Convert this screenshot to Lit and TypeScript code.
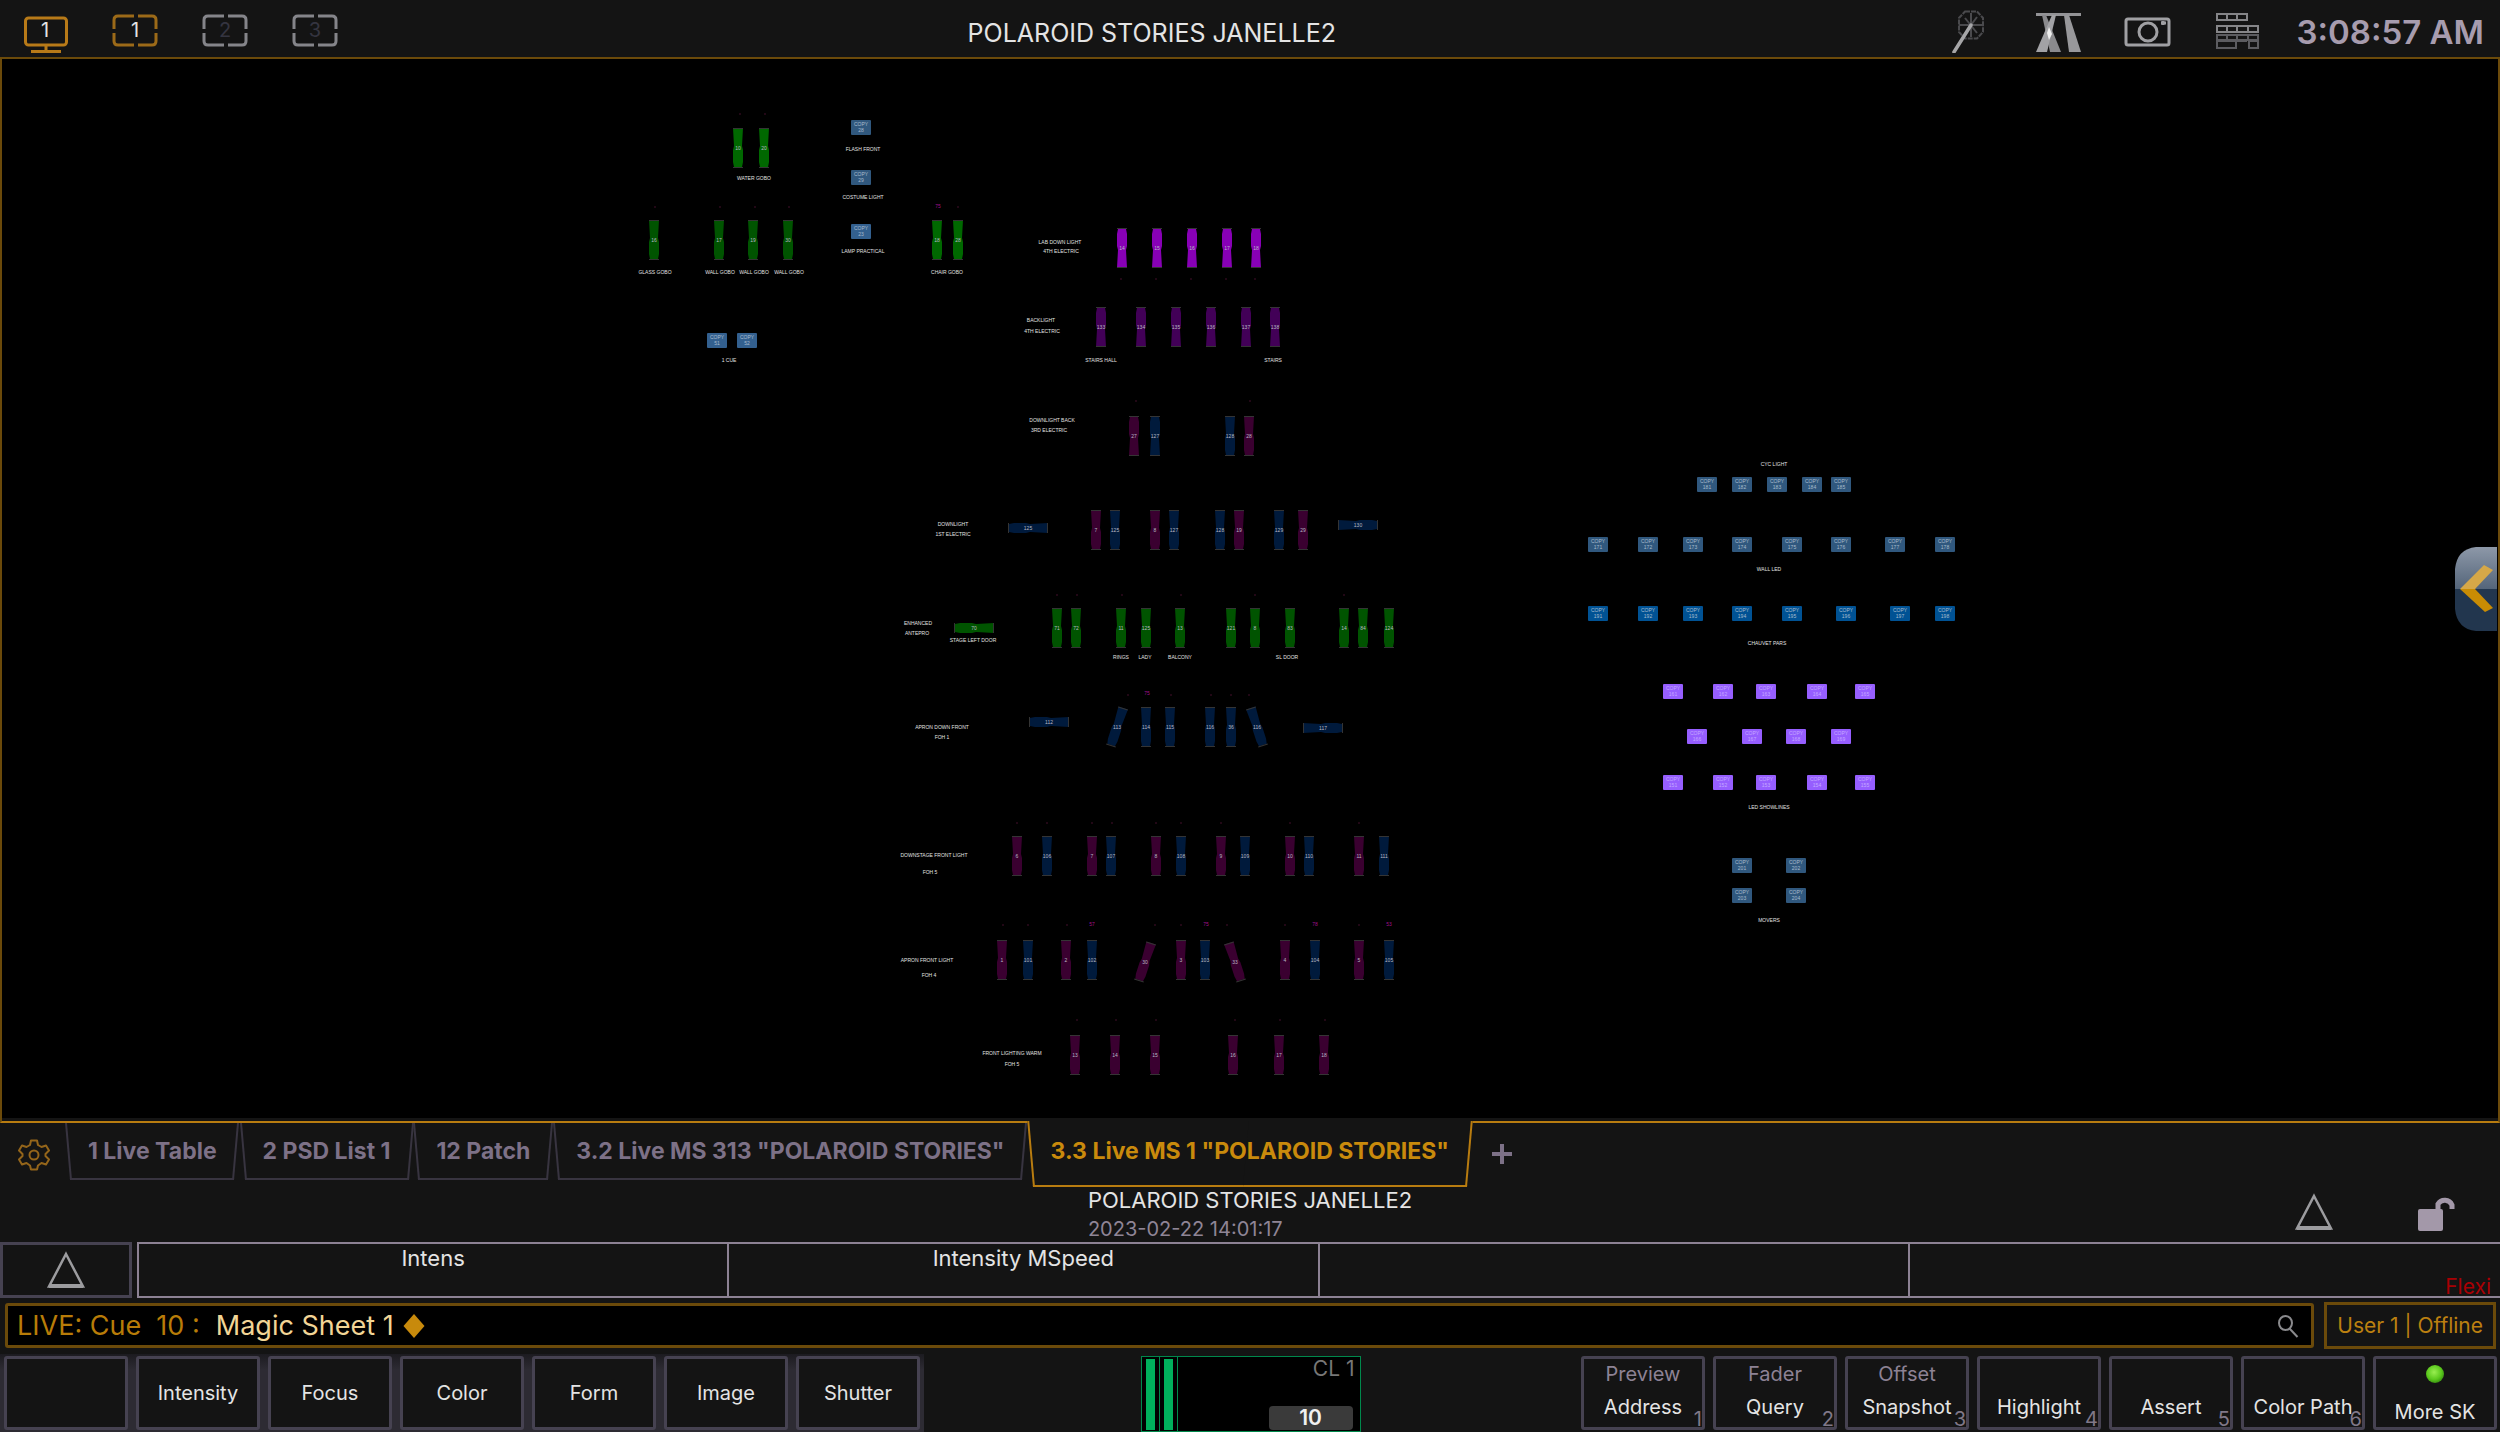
import { LitElement, html, svg, css, nothing } from "lit";
import { customElement } from "lit/decorators.js";
import { classMap } from "lit/directives/class-map.js";

type Spot = [tone: string, x: number, y: number, channel: string, turn?: number];
type Tile = [tone: string, x: number, y: number, channel: string];
type Note = [text: string, x: number, y: number];

/* Lighting instruments: tone, centre, channel, rotation. */
const SPOTS: Spot[] = [
  ["lime", 738, 148, "10"], ["lime", 764, 148, "20"],
  ["green", 654, 240, "16"], ["green", 719, 240, "17"], ["green", 753, 240, "19"], ["green", 788, 240, "30"],
  ["lime", 937, 240, "18"], ["lime", 958, 240, "28"],
  ["violet", 1122, 248, "14", 180], ["violet", 1157, 248, "15", 180], ["violet", 1192, 248, "16", 180],
  ["violet", 1227, 248, "17", 180], ["violet", 1256, 248, "18", 180],
  ["plum", 1101, 327, "133", 180], ["plum", 1141, 327, "134", 180], ["plum", 1176, 327, "135", 180],
  ["plum", 1211, 327, "136", 180], ["plum", 1246, 327, "137", 180], ["plum", 1275, 327, "138", 180],
  ["wine", 1134, 436, "27", 180], ["navy", 1155, 436, "127", 180], ["navy", 1230, 436, "128"], ["wine", 1249, 436, "28"],
  ["navy", 1028, 528, "125", 90], ["wine", 1096, 530, "7"], ["navy", 1115, 530, "125"],
  ["wine", 1155, 530, "8"], ["navy", 1174, 530, "127"], ["navy", 1220, 530, "128"], ["wine", 1239, 530, "19"],
  ["navy", 1279, 530, "129"], ["wine", 1303, 530, "29"], ["navy", 1358, 525, "130", -90],
  ["green", 974, 628, "70", 90], ["green", 1057, 628, "71"], ["green", 1076, 628, "72"],
  ["green", 1121, 628, "11"], ["green", 1146, 628, "125"], ["green", 1180, 628, "13"],
  ["green", 1231, 628, "121"], ["green", 1255, 628, "8"], ["green", 1290, 628, "83"],
  ["green", 1344, 628, "14"], ["green", 1363, 628, "84"], ["green", 1389, 628, "124"],
  ["navy", 1049, 722, "112", 90], ["navy", 1117, 727, "113", 18], ["navy", 1146, 727, "114"],
  ["navy", 1170, 727, "115"], ["navy", 1210, 727, "116"], ["navy", 1231, 727, "36"],
  ["navy", 1257, 727, "116", -18], ["navy", 1323, 728, "117", -90],
  ["wine", 1017, 856, "6"], ["navy", 1047, 856, "106"], ["wine", 1092, 856, "7"], ["navy", 1111, 856, "107"],
  ["wine", 1156, 856, "8"], ["navy", 1181, 856, "108"], ["wine", 1221, 856, "9"], ["navy", 1245, 856, "109"],
  ["wine", 1290, 856, "10"], ["navy", 1309, 856, "110"], ["wine", 1359, 856, "11"], ["navy", 1384, 856, "111"],
  ["wine", 1002, 960, "1"], ["navy", 1028, 960, "101"], ["wine", 1066, 960, "2"], ["navy", 1092, 960, "102"],
  ["wine", 1145, 962, "30", 18], ["wine", 1181, 960, "3"], ["navy", 1205, 960, "103"], ["wine", 1235, 962, "33", -18],
  ["wine", 1285, 960, "4"], ["navy", 1315, 960, "104"], ["wine", 1359, 960, "5"], ["navy", 1389, 960, "105"],
  ["wine", 1075, 1055, "13"], ["wine", 1115, 1055, "14"], ["wine", 1155, 1055, "15"],
  ["wine", 1233, 1055, "16"], ["wine", 1279, 1055, "17"], ["wine", 1324, 1055, "18"],
];

const line = (tone: string, y: number, first: number, xs: number[]): Tile[] =>
  xs.map((x, i) => [tone, x, y, String(first + i)] as Tile);

const TILES: Tile[] = [
  ["steel", 861, 128, "28"], ["steel", 861, 178, "29"], ["sky", 861, 232, "23"],
  ["sky", 717, 341, "51"], ["sky", 747, 341, "52"],
  ...line("steel", 485, 181, [1707, 1742, 1777, 1812, 1841]),
  ...line("steel", 545, 171, [1598, 1648, 1693, 1742, 1792, 1841, 1895, 1945]),
  ...line("azure", 614, 191, [1598, 1648, 1693, 1742, 1792, 1846, 1900, 1945]),
  ...line("lilac", 692, 161, [1673, 1723, 1766, 1817, 1865]),
  ...line("lilac", 737, 166, [1697, 1752, 1796, 1841]),
  ...line("lilac", 783, 151, [1673, 1723, 1766, 1817, 1865]),
  ...line("steel", 866, 201, [1742, 1796]),
  ...line("steel", 896, 203, [1742, 1796]),
];

const NOTES: Note[] = [
  ["FLASH FRONT", 863, 149], ["WATER GOBO", 754, 178], ["COSTUME LIGHT", 863, 197], ["LAMP PRACTICAL", 863, 251],
  ["GLASS GOBO", 655, 272], ["WALL GOBO", 720, 272], ["WALL GOBO", 754, 272], ["WALL GOBO", 789, 272],
  ["CHAIR GOBO", 947, 272], ["1 CUE", 729, 360],
  ["LAB DOWN LIGHT", 1060, 242], ["4TH ELECTRIC", 1061, 251],
  ["BACKLIGHT", 1041, 320], ["4TH ELECTRIC", 1042, 331], ["STAIRS HALL", 1101, 360], ["STAIRS", 1273, 360],
  ["DOWNLIGHT BACK", 1052, 420], ["3RD ELECTRIC", 1049, 430],
  ["DOWNLIGHT", 953, 524], ["1ST ELECTRIC", 953, 534],
  ["ENHANCED", 918, 623], ["ANTEPRO", 917, 633], ["STAGE LEFT DOOR", 973, 640],
  ["RINGS", 1121, 657], ["LADY", 1145, 657], ["BALCONY", 1180, 657], ["SL DOOR", 1287, 657],
  ["APRON DOWN FRONT", 942, 727], ["FOH 1", 942, 737],
  ["DOWNSTAGE FRONT LIGHT", 934, 855], ["FOH 5", 930, 872],
  ["APRON FRONT LIGHT", 927, 960], ["FOH 4", 929, 975],
  ["FRONT LIGHTING WARM", 1012, 1053], ["FOH 5", 1012, 1064],
  ["CYC LIGHT", 1774, 464], ["WALL LED", 1769, 569], ["CHAUVET PARS", 1767, 643],
  ["LED SHOWLINES", 1769, 807], ["MOVERS", 1769, 920],
];

/* Changed levels above an instrument. */
const LEVELS: Note[] = [
  ["75", 938, 206], ["75", 1147, 693], ["57", 1092, 924], ["75", 1206, 924], ["78", 1315, 924], ["53", 1389, 924],
];

/* Levels at zero: a barely lit dot above the instrument. */
const ZEROS: [number, number[]][] = [
  [114, [740, 765]],
  [207, [655, 720, 755, 789, 958]],
  [279, [1121, 1156, 1191, 1226, 1255]],
  [401, [1136, 1250]],
  [595, [1057, 1077, 1122, 1181, 1255, 1344]],
  [695, [1128, 1171, 1211, 1231, 1249]],
  [823, [1017, 1047, 1092, 1112, 1156, 1181, 1221, 1290, 1359]],
  [925, [1003, 1028, 1067, 1155, 1181, 1227, 1285, 1359]],
  [1020, [1077, 1116, 1156, 1235, 1280, 1325]],
];

const TABS = [
  "1 Live Table",
  "2 PSD List 1",
  "12 Patch",
  '3.2 Live MS 313 "POLAROID STORIES"',
  '3.3 Live MS 1 "POLAROID STORIES"',
];

const ENCODERS = ["Intens", "Intensity MSpeed", "", ""];
const CATEGORIES = ["", "Intensity", "Focus", "Color", "Form", "Image", "Shutter"];
const SOFTKEYS = [
  ["Preview", "Address"], ["Fader", "Query"], ["Offset", "Snapshot"],
  ["", "Highlight"], ["", "Assert"], ["", "Color Path"],
];

const triangle = html`<svg class="triangle" viewBox="0 0 40 38" aria-hidden="true">
  <path d="M20 3 37 35.5H3Z" /><path class="base" d="M3 35H37" />
</svg>`;

@customElement("magic-sheet")
export class MagicSheet extends LitElement {
  static styles = css`
    :host { display: block; min-height: 0; }
    .canvas { display: block; width: 100%; height: 100%; font-family: "Liberation Sans", Arial, sans-serif; }
    text { text-anchor: middle; dominant-baseline: central; }
    .note { font-size: 5px; fill: #e2e2e2; }
    .channel { font-size: 5px; fill: #b9b9c4; }
    .caption { font-size: 5px; fill: #a9bccd; }
    .lilac ~ .caption { fill: #c4a8ff; }
    .level { font-size: 5px; fill: #a0108c; }
    .zero { fill: #2c0a1c; }
    .caps { stroke: #343434; }
    .lime { fill: #006800; }
    .green { fill: #005400; }
    .violet { fill: #8800b6; }
    .plum { fill: #420057; }
    .wine { fill: #3a0030; }
    .navy { fill: #001a3c; }
    .steel { fill: #30587e; }
    .sky { fill: #33608f; }
    .azure { fill: #005294; }
    .lilac { fill: #965eff; }
  `;

  render() {
    return html`<svg class="canvas" viewBox="2 59 2496 1059" role="img" aria-label="Magic Sheet 1">
      ${SPOTS.map(([tone, x, y, channel, turn = 0]) => svg`
        <g transform="translate(${x} ${y})">
          <g transform="rotate(${turn})">
            <path class=${tone} d="M-5-20H5L4-2 5 2V14L4 19H-4L-5 14V2L-4-2Z" />
            <path class="caps" d="M-5-19.5H5M-5 19.5H5" />
          </g>
          <text class="channel" x="0" y="0">${channel}</text>
        </g>`)}
      ${TILES.map(([tone, x, y, channel]) => svg`
        <g transform="translate(${x} ${y})">
          <rect class=${tone} x="-10" y="-8" width="20" height="15" rx="1" />
          <text class="caption" x="0" y="-4">COPY</text>
          <text class="caption" x="0" y="2">${channel}</text>
        </g>`)}
      ${NOTES.map(([text, x, y]) => svg`<text class="note" x=${x} y=${y}>${text}</text>`)}
      ${LEVELS.map(([text, x, y]) => svg`<text class="level" x=${x} y=${y}>${text}</text>`)}
      ${ZEROS.map(([y, xs]) => xs.map((x) => svg`<circle class="zero" cx=${x} cy=${y} r="1" />`))}
    </svg>`;
  }
}

@customElement("app-root")
export class AppRoot extends LitElement {
  static styles = css`
    :host {
      display: flex; flex-direction: column; height: 100vh; overflow: hidden;
      background: #141414; color: #e4e4e4;
      font-family: Inter, "Liberation Sans", sans-serif; font-size: 20px; line-height: 24px;
    }
    * { box-sizing: border-box; }
    button, input { font: inherit; color: inherit; background: none; border: 0; padding: 0; margin: 0; border-radius: 0; }
    svg { display: block; fill: none; }
    h1, h2, p { margin: 0; font-weight: 400; }

    .topbar { display: flex; align-items: center; height: 57px; padding: 0 16px 0 20px; flex: none; }
    .screens { display: flex; gap: 42px; padding-left: 1px; }
    .screen { position: relative; width: 48px; height: 48px; }
    .screen svg { width: 48px; height: 48px; stroke: #85858a; stroke-width: 3; }
    .screen span { position: absolute; inset: 13px 0 auto; text-align: center; line-height: 24px; color: #343440; }
    .screen.lit svg { stroke: #9c6a18; }
    .screen.current svg { stroke: #b87a18; }
    .screen.lit span, .screen.current span { color: #e4e4e4; }
    .title { flex: 1; text-align: center; font-size: 25px; line-height: 32px; padding: 8px 0 0 24px; }
    .tools { display: flex; justify-content: flex-end; align-items: center; gap: 38px; }
    .tools svg { width: 52px; height: 48px; }
    .clock { font-size: 33px; line-height: 40px; font-weight: 600; color: #a79cae; padding-top: 6px; white-space: nowrap; margin-left: -4px; }

    .sheet { position: relative; flex: 1; min-height: 0; background: #000; border: 2px solid #6b4a0a; border-bottom-color: #b87c10; display: flex; flex-direction: column; }
    .sheet magic-sheet { flex: 1; }
    .lip { height: 3px; background: #141414; }
    .drawer { position: absolute; right: 1px; top: calc(46% - 1px); width: 42px; height: 84px; }
    .drawer svg { width: 42px; height: 84px; }

    .tabs { display: flex; align-items: flex-start; height: 64px; padding-left: 65px; position: relative; flex: none; }
    .settings { position: absolute; left: 17px; top: 15px; width: 34px; height: 34px; }
    .tab { position: relative; height: 57px; padding: 0 23px 1px; color: #7d7187; font-size: 23px; font-weight: 700; white-space: nowrap; }
    .tab::before, .tab::after { content: ""; position: absolute; top: 0; bottom: 0; width: 50%; border: 0 solid #383440; border-bottom-width: 2px; }
    .tab::before { left: 5px; border-left-width: 2px; transform: skewX(5deg); transform-origin: bottom; }
    .tab::after { right: 5px; border-right-width: 2px; transform: skewX(-5deg); transform-origin: bottom; }
    .tab span { position: relative; z-index: 1; }
    .tab.active { height: 66px; margin-top: -2px; padding-bottom: 6px; color: #c98a0c; }
    .tab.active::before, .tab.active::after { background: #141414; border-color: #b87c10; }
    .add { width: 60px; height: 62px; display: grid; place-items: center; }
    .add svg { width: 20px; height: 20px; }

    .info { display: grid; grid-template-columns: 1fr auto 1fr; height: 55px; flex: none; }
    .show { grid-column: 2; }
    .show h2 { font-size: 22px; line-height: 26px; }
    .show p { font-size: 20px; line-height: 32px; color: #8f8596; }
    .status { display: flex; justify-content: flex-end; gap: 82px; padding: 6px 42px 0 0; }
    .triangle { width: 40px; height: 38px; stroke: #9c9c9f; stroke-width: 2.5; }
    .triangle .base { stroke-width: 4; }
    .lock { width: 42px; height: 40px; }

    .encoders { display: flex; gap: 5px; height: 56px; flex: none; }
    .page { width: 132px; border: 3px solid #464251; display: grid; place-items: center; }
    .wheels { flex: 1; display: grid; grid-template-columns: repeat(4, 1fr); border: 2px solid #8d8294; border-right: 0; }
    .wheel { position: relative; font-size: 22px; padding: 2px 0 26px; }
    .wheel:not(:last-child) { border-right: 2px solid #8d8294; }
    .flexi { position: absolute; right: 9px; bottom: -3px; font-size: 21px; line-height: 24px; color: #a80004; }

    .command { display: flex; gap: 10px; align-items: center; padding: 4px 4px 5px 5px; flex: none; }
    .prompt { flex: 1; height: 45px; display: flex; align-items: center; border: 3px solid #6b4a0a; border-radius: 3px; background: #000; padding: 0 12px 0 9px; font-size: 27px; line-height: 32px; }
    .prompt label { color: #b87c08; white-space: pre; margin-right: 16px; }
    .prompt input { field-sizing: content; color: #f2d596; outline: 0; }
    .diamond { width: 22px; height: 26px; margin: 0 auto 0 9px; }
    .search svg { width: 22px; height: 24px; }
    .user { height: 47px; border: 3px solid #6b4a0a; padding: 0 10px; color: #bc8010; font-size: 21px; white-space: nowrap; }

    .keys { display: flex; justify-content: space-between; height: 78px; flex: none; }
    .bank { display: flex; gap: 8px; padding: 2px 4px; }
    .bank.left { background: linear-gradient(#1c1b20, #2d2b33 20%); }
    .bank.right { padding-right: 3px; }
    .key { position: relative; width: 124px; height: 74px; border: 3px solid #464251; border-radius: 3px; background: #141414; white-space: nowrap; }
    .key.pair { display: grid; grid-template-rows: 30px 36px; align-items: center; justify-items: center; }
    .key.pair .upper { color: #8d8294; }
    .key sub { position: absolute; right: 0; bottom: -4px; font-size: 20px; line-height: 24px; color: #807888; }
    .key.more { grid-template-rows: 30px 46px; }
    .key .led { width: 18px; height: 18px; border-radius: 50%; background: radial-gradient(circle at 45% 40%, #98ee50, #5ac81c 50%, #1a5a08); }
    .cue { width: 220px; height: 76px; margin-top: 2px; display: flex; border: 1px solid #00884c; background: #000; }
    .fader { width: 18px; border-right: 1px solid #00884c; padding: 2px 4px 1px; }
    .fader i { display: block; height: 100%; background: #00b05c; }
    .cue-text { flex: 1; display: flex; flex-direction: column; align-items: flex-end; justify-content: space-between; padding: 0 5px 1px; }
    .cue-list { color: #777; font-size: 21px; }
    .cue-number { width: 84px; margin-right: 2px; border-radius: 4px; background: #3a3a3a; color: #f0f0f0; font-size: 21px; font-weight: 600; text-align: center; }
    .spacer { flex: 1; }
  `;

  private screen(label: string, kind: "current" | "lit" | "off") {
    return html`<button class=${classMap({ screen: true, lit: kind === "lit", current: kind === "current" })} aria-label="Screen ${label}">
      ${kind === "current"
        ? html`<svg viewBox="0 0 48 48"><rect x="4.5" y="13" width="41" height="27" rx="3" /><path d="M25 40v6M10 46.500H40" /></svg>`
        : html`<svg viewBox="0 0 48 48"><path d="M23 11H7q-4 0-4 4v9M27 11h14q4 0 4 4v9M3 28v8q0 4 4 4H23M45 28v8q0 4-4 4H27" /></svg>`}
      <span>${label}</span>
    </button>`;
  }

  render() {
    return html`
      <header class="topbar">
        <nav class="screens" aria-label="Screens">
          ${this.screen("1", "current")}${this.screen("1", "lit")}${this.screen("2", "off")}${this.screen("3", "off")}
        </nav>
        <h1 class="title">POLAROID STORIES JANELLE2</h1>
        <div class="tools">
          <button aria-label="Color wheel"><svg viewBox="0 0 52 48">
            <g stroke="#4a4a4d" stroke-width="2"><path d="M24 6.500H36L42 13V27L36 33.500H24L18 27V13Z" stroke-dasharray="5 1" /><path d="M30 8V32M18 20H42M24 13 36 28M36 12 30 20" /></g>
            <path d="M30 20 13 47" stroke="#a6a6a8" stroke-width="3.500" stroke-linecap="round" />
          </svg></button>
          <button aria-label="Beams"><svg viewBox="0 0 52 48">
            <path d="M5 8H50V11H5Z" fill="#939396" />
            <path d="M11 10H15L30 47H19Z" fill="#8a8a8d" /><path d="M21 10H25L16 47H5Z" fill="#a2a2a5" /><path d="M16 28 18 22 21 29 18 35Z" fill="#eee" /><path d="M33 10H38L50 47H38Z" fill="#98989b" />
          </svg></button>
          <button aria-label="Snapshot"><svg viewBox="0 0 52 48" stroke="#a0a0a3" stroke-width="3">
            <rect x="5" y="14" width="43" height="26" rx="2" /><ellipse cx="27" cy="27" rx="9" ry="9" /><path d="M42 16V20M40 18H45" />
          </svg></button>
          <button aria-label="Keyboard"><svg viewBox="0 0 52 48" stroke="#858588" stroke-width="2">
            <path d="M6 9H36V15H6ZM16 9V15M26 9V15M6 21H47V27H6ZM16 21V27M26 21V27M37 21V27" />
            <path d="M6 30H47V35H6ZM16 30V35M26 30V35M37 30V35M6 36H25V43H6ZM26 35V36H36M38 36H47V43H38Z" stroke="#5c5c60" />
          </svg></button>
          <time class="clock">3:08:57 AM</time>
        </div>
      </header>

      <main class="sheet">
        <magic-sheet></magic-sheet>
        <div class="lip"></div>
        <button class="drawer" aria-label="Open drawer"><svg viewBox="0 0 42 84">
          <defs><linearGradient id="gloss" x1="0" y1="0" x2="0" y2="1"><stop offset="0" stop-color="#8d98a8" /><stop offset="1" stop-color="#54657a" /></linearGradient></defs>
          <path d="M0 42V22Q2 2 21 0H42V42Z" fill="url(#gloss)" /><path d="M0 42V62Q2 82 21 84H42V42Z" fill="#22364e" />
          <path d="M5 42 29 18 38 23 20 42Z" fill="#d6a848" /><path d="M5 42 30 65 38 61 20 42Z" fill="#c98c04" />
        </svg></button>
      </main>

      <nav class="tabs" aria-label="Displays">
        <button class="settings" aria-label="Settings"><svg viewBox="0 0 34 34" stroke="#94651a" stroke-width="2" stroke-linejoin="round">
          <path d="M14 2.500H20L21 7 24.500 9 29 7.500 32 12.500 28.500 16V18L32 21.500 29 26.500 24.500 25 21 27.500 20 31.500H14L13 27.500 9.500 25 5 26.500 2 21.500 5.500 18V16L2 12.500 5 7.500 9.500 9 13 7Z" /><circle cx="17" cy="17" r="4.500" />
        </svg></button>
        ${TABS.map((name, i) => html`<button class=${classMap({ tab: true, active: i === TABS.length - 1 })}><span>${name}</span></button>`)}
        <button class="add" aria-label="Add display"><svg viewBox="0 0 20 20"><path d="M10 0V20M0 10H20" stroke="#7d7187" stroke-width="4" /></svg></button>
      </nav>

      <section class="info">
        <div class="show"><h2>POLAROID STORIES JANELLE2</h2><p>2023-02-22 14:01:17</p></div>
        <div class="status">
          ${triangle}
          <svg class="lock" viewBox="0 0 42 40" aria-label="Unlocked"><rect x="2" y="16" width="25" height="22" rx="2" fill="#a398a9" /><path d="M22 17V11a8 8 0 0 1 14 1v4" stroke="#a398a9" stroke-width="5" /></svg>
        </div>
      </section>

      <section class="encoders">
        <button class="page" aria-label="Encoder page">${triangle}</button>
        <div class="wheels">
          ${ENCODERS.map((name, i) => html`<button class="wheel">${name || "\u00a0"}${i === 3 ? html`<span class="flexi">Flexi</span>` : nothing}</button>`)}
        </div>
      </section>

      <section class="command">
        <div class="prompt">
          <label for="command">LIVE: Cue  10 :</label><input id="command" value="Magic Sheet 1" />
          <svg class="diamond" viewBox="0 0 22 26" aria-hidden="true"><path d="M11 1 21.500 13 11 25 .500 13Z" fill="#c88a0c" /></svg>
          <button class="search" aria-label="Search"><svg viewBox="0 0 22 24" stroke="#8a8a8d" stroke-width="2"><ellipse cx="8.500" cy="9" rx="6.500" ry="7" /><path d="M12.500 14.500 20.500 23" /></svg></button>
        </div>
        <button class="user">User 1 | Offline</button>
      </section>

      <footer class="keys">
        <div class="bank left">${CATEGORIES.map((name) => html`<button class="key" aria-label=${name || "Blank key"}>${name}</button>`)}</div>
        <div class="spacer"></div>
        <div class="cue"><div class="fader"><i></i></div><div class="fader"><i></i></div>
          <div class="cue-text"><span class="cue-list">CL 1</span><span class="cue-number">10</span></div></div>
        <div class="spacer"></div>
        <div class="bank right">
          ${SOFTKEYS.map(([upper, name], i) => html`<button class="key pair"><span class="upper">${upper}</span><span>${name}</span><sub>${i + 1}</sub></button>`)}
          <button class="key pair more"><span class="led"></span><span>More SK</span></button>
        </div>
      </footer>`;
  }
}
